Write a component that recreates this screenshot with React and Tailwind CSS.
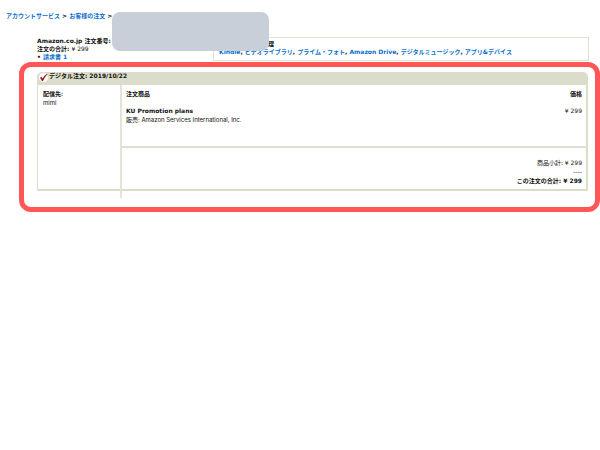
import React from "react";

const digitalLinks = [
  "Kindle",
  "ビデオライブラリ",
  "プライム・フォト",
  "Amazon Drive",
  "デジタルミュージック",
  "アプリ&デバイス",
];

const wide = "font-['DejaVu_Sans','Noto_Sans_CJK_JP',sans-serif]";

function Breadcrumb() {
  return (
    <nav className={`${wide} pl-[6px] pt-[11px] font-bold text-[#222]`}>
      <a href="#account" className="text-[#0a6fce]">アカウントサービス</a>
      {" > "}
      <a href="#orders" className="text-[#0a6fce]">お客様の注文</a>
      {" >"}
    </nav>
  );
}

function OrderSummary() {
  return (
    <div className={`${wide} w-[176px] shrink-0 font-bold`}>
      <p>Amazon.co.jp 注文番号:</p>
      <p>
        注文の合計: <span className="font-normal">¥ 299</span>
      </p>
      <p>
        <span>• </span>
        <a href="#invoice" className="text-[#0a6fce]">請求書 1</a>
      </p>
    </div>
  );
}

function DigitalLinks() {
  return (
    <div className={`${wide} flex-1 border border-[#e3e4d0] pb-[4px] pl-[5px] pt-[2px] font-bold`}>
      <p className="pl-[49px]">理</p>
      <p>
        {digitalLinks.map((label, i) => (
          <React.Fragment key={label}>
            {i > 0 && ", "}
            <a href="#digital" className="text-[#0a6fce]">{label}</a>
          </React.Fragment>
        ))}
      </p>
    </div>
  );
}

function CheckMark() {
  return (
    <span className="flex size-[9px] shrink-0 items-center justify-center rounded-full bg-white">
      <svg viewBox="0 0 10 10" className="size-[9px]" aria-hidden="true">
        <path d="M1.2 5.2 L2.9 4.3 L4 6.2 Q5.8 2.8 8.8 .8 L9.4 1.4 Q6.4 4.5 4.4 9 L3.1 9 Z" fill="#94202a" />
      </svg>
    </span>
  );
}

function OrderCard() {
  return (
    <section>
      <h2 className={`${wide} flex h-[13px] items-start gap-[1px] rounded-t-[5px] bg-[#dbddca] pl-[2px] font-bold leading-[8px]`}>
        <span className="pt-[1px]"><CheckMark /></span>
        <span>デジタル注文: 2019/10/22</span>
      </h2>

      <div className="flex border-2 border-l border-t-0 border-[#dbddcb]">
        {/* divider runs a little below the card */}
        <div className="-mb-[9px] w-[84px] shrink-0 border-r-2 border-[#e3e4d6] pl-[5px] pt-[4px]">
          <p className="font-bold">配信先:</p>
          <p>mimi</p>
        </div>

        <div className="flex-1">
          <table className="w-full">
            <thead>
              <tr>
                <th className="pl-[4px] pt-[4px] text-left">注文商品</th>
                <th className="pr-[4px] pt-[4px] text-right">価格</th>
              </tr>
            </thead>
            <tbody>
              <tr className="align-top">
                <td className="pb-[22px] pl-[4px] pt-[8px]">
                  <p className={`${wide} font-bold`}>KU Promotion plans</p>
                  <p>販売: Amazon Services International, Inc.</p>
                </td>
                <td className={`${wide} pr-[4px] pt-[8px] text-right`}>¥ 299</td>
              </tr>
            </tbody>
          </table>
          <div className={`${wide} border-t-2 border-[#dfe0d0] pb-[4px] pr-[4px] pt-[10px] text-right`}>
            <p>商品小計: ¥ 299</p>
            <p>----</p>
            <p className="font-bold">この注文の合計: ¥ 299</p>
          </div>
        </div>
      </div>
    </section>
  );
}

export default function App() {
  return (
    <div className="relative min-h-screen bg-white font-['Inter','Noto_Sans_CJK_JP',sans-serif] text-[6px] leading-[9px] text-[#111]">
      <Breadcrumb />
      <header className="flex items-start pl-[37px] pr-[11px] pt-[17px] leading-[8px]">
        <OrderSummary />
        <DigitalLinks />
      </header>
      <div className="absolute left-[112px] top-[12px] h-[39px] w-[157px] rounded-[8px] bg-[#c8cfd9]" />

      <main className="ml-[19px] mt-[1px] rounded-[12px] border-[5px] border-[#ff5757] pb-[16px] pl-[13px] pr-[7px] pt-[5px]">
        <OrderCard />
      </main>
    </div>
  );
}
